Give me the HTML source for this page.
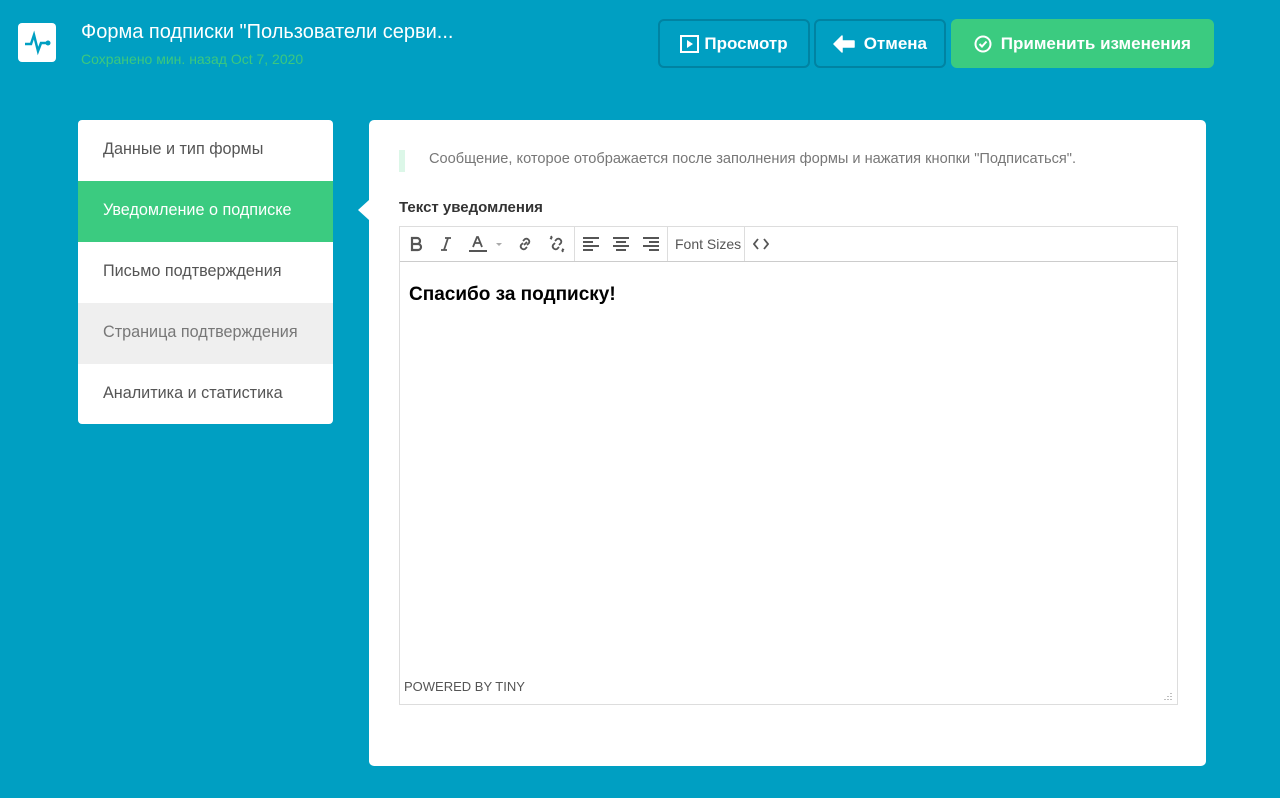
<!DOCTYPE html>
<html><head><meta charset="utf-8"><style>
*{box-sizing:border-box;margin:0;padding:0}
body{width:1280px;height:798px;background:#009fc2;font-family:"Liberation Sans",sans-serif;position:relative;overflow:hidden}
.logo{position:absolute;left:18px;top:23px;width:38px;height:39px;background:#fff;border-radius:4px}
.title{position:absolute;left:81px;top:21px;color:#fff;font-size:20px}
.sub{position:absolute;left:81px;top:51px;color:#3cc87e;font-size:14px}
.btn{position:absolute;top:19px;height:49px;border-radius:6px;border:2px solid #0083a2;color:#fff;font-weight:bold;font-size:17px;display:flex;align-items:center;justify-content:center;gap:4px}
.menu{position:absolute;left:78px;top:120px;width:255px;height:304px;background:#fff;border-radius:4px;overflow:hidden}
.menu div{height:61px;line-height:58px;padding-left:25px;font-size:16.2px;color:#555}
.panel{position:absolute;left:369px;top:120px;width:837px;height:646px;background:#fff;border-radius:5px}
.ed{position:absolute;left:30px;top:106px;width:779px;height:479px;border:1px solid #ddd}
.tb{height:35px;border-bottom:1px solid #ccc;display:flex;align-items:center;font-size:14px;color:#555}
.g{display:flex;align-items:center;height:100%;border-right:1px solid #ddd;padding:0 1px}
.g svg{margin:0 7px}
</style></head><body>
<div class="logo"><svg width="38" height="39" viewBox="0 0 38 39"><path d="M7 21h6l3-9 4 16 3-8h6" fill="none" stroke="#009fc2" stroke-width="2.5"/><circle cx="30" cy="20" r="2.5" fill="#009fc2"/></svg></div>
<div class="title">Форма подписки "Пользователи серви...</div>
<div class="sub">Сохранено мин. назад Oct 7, 2020</div>
<div class="btn" style="left:658px;width:152px"><svg width="20" height="18"><rect x="1" y="1" width="17" height="16" fill="none" stroke="#fff" stroke-width="2"/><path d="M7 5l6 4-6 4z" fill="#fff"/></svg>Просмотр</div>
<div class="btn" style="left:814px;width:132px"><svg width="22" height="18" viewBox="0 0 22 18"><path d="M1 9l8-8v5h12v6H9v5z" fill="#fff" stroke="#fff" stroke-linejoin="round" stroke-width="1.5"/></svg>&nbsp;Отмена</div>
<div class="btn" style="left:951px;width:263px;background:#3bcb80;border-color:#3bcb80"><svg width="18" height="18"><circle cx="9" cy="9" r="7.5" fill="none" stroke="#fff" stroke-width="2"/><path d="M5.5 9l2.5 2.5 4.5-5" fill="none" stroke="#fff" stroke-width="2"/></svg>&nbsp;Применить изменения</div>
<div class="menu">
<div>Данные и тип формы</div>
<div style="background:#3bcb80;color:#fff">Уведомление о подписке</div>
<div>Письмо подтверждения</div>
<div style="background:#efefef;color:#777">Страница подтверждения</div>
<div>Аналитика и статистика</div>
</div>
<div style="position:absolute;left:358px;top:200px;width:0;height:0;border-top:10px solid transparent;border-bottom:10px solid transparent;border-right:11px solid #fff"></div>
<div class="panel">
<div style="position:absolute;left:30px;top:30px;width:6px;height:22px;background:#dcf7e8"></div>
<div style="position:absolute;left:60px;top:31px;font-size:14.6px;color:#777">Сообщение, которое отображается после заполнения формы и нажатия кнопки "Подписаться".</div>
<div style="position:absolute;left:30px;top:79px;font-size:15px;font-weight:bold;color:#333">Текст уведомления</div>
<div class="ed">
<div class="tb">
<div class="g">
<svg width="16" height="16" viewBox="0 0 16 16"><path d="M4 2h5a3 3 0 010 6H4zM4 8h6a3 3 0 010 6H4z" fill="none" stroke="#555" stroke-width="2.2"/></svg>
<svg width="16" height="16" viewBox="0 0 16 16"><path d="M7 2h6M3 14h6M10 2L6 14" fill="none" stroke="#555" stroke-width="1.8"/></svg>
<svg width="20" height="18" viewBox="0 0 20 18"><path d="M5 12L9 2h1l4 10M6.5 8h6" fill="none" stroke="#555" stroke-width="1.8"/><rect x="1" y="15" width="18" height="2" fill="#555"/></svg>
<svg width="8" height="16" viewBox="0 0 8 16" style="margin:0 6px 0 0"><path d="M1 7h6l-3 3z" fill="#aaa"/></svg>
<svg width="18" height="18" viewBox="0 0 18 18"><path d="M8 10l3-3M7 6l2-2a3 3 0 014 4l-2 2M11 12l-2 2a3 3 0 01-4-4l2-2" fill="none" stroke="#555" stroke-width="1.8"/></svg>
<svg width="18" height="18" viewBox="0 0 18 18"><path d="M7 6l2-2a3 3 0 014 4l-2 2M11 12l-2 2a3 3 0 01-4-4l2-2M2 3l2 1M3 1l1 2M16 15l-2-1M15 17l-1-2" fill="none" stroke="#555" stroke-width="1.8"/></svg>
</div>
<div class="g">
<svg width="16" height="14"><path d="M0 1h16M0 5h10M0 9h16M0 13h10" stroke="#555" stroke-width="2"/></svg>
<svg width="16" height="14"><path d="M0 1h16M3 5h10M0 9h16M3 13h10" stroke="#555" stroke-width="2"/></svg>
<svg width="16" height="14"><path d="M0 1h16M6 5h10M0 9h16M6 13h10" stroke="#555" stroke-width="2"/></svg>
</div>
<div class="g" style="padding:0 3px 0 7px">Font Sizes</div>
<div class="g" style="border:none"><svg width="16" height="12"><path d="M5 1L1 6l4 5M11 1l4 5-4 5" fill="none" stroke="#555" stroke-width="1.8"/></svg></div>
</div>
<div style="position:absolute;left:9px;top:57px;font-size:19px;font-weight:bold;color:#000">Спасибо за подписку!</div>
<div style="position:absolute;left:4px;top:452px;font-size:13px;color:#555">POWERED BY TINY</div>
<svg style="position:absolute;right:4px;bottom:3px" width="10" height="10"><path d="M8 2v1M5 5v1M8 5v1M2 8v1M5 8v1M8 8v1" stroke="#aaa" stroke-width="1.5"/></svg>
</div>
</div>
</body></html>
